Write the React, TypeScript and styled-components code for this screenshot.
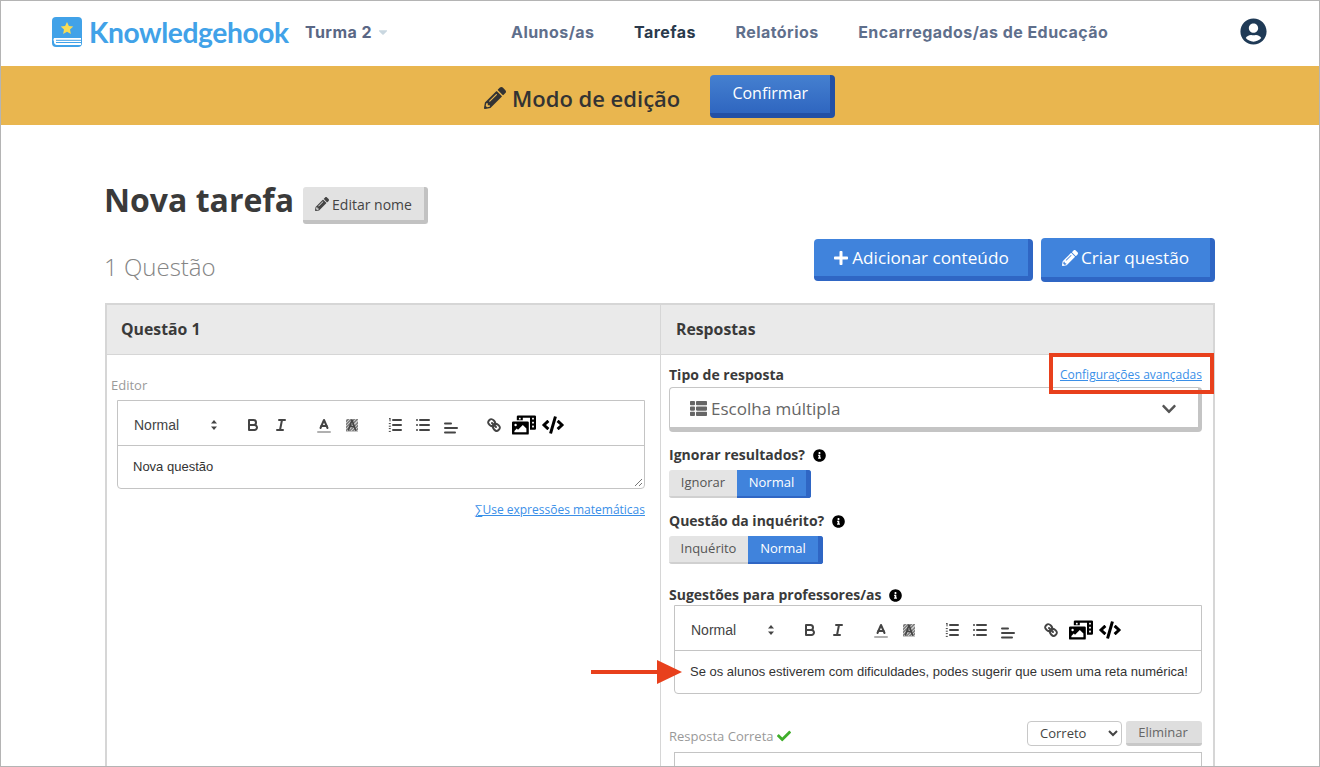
import React from 'react';
import styled, { createGlobalStyle } from 'styled-components';
import {
  FaPencilAlt,
  FaPlus,
  FaThList,
  FaChevronDown,
  FaInfoCircle,
  FaCheck,
  FaUserCircle,
  FaCaretDown,
  FaPhotoVideo,
  FaCode,
} from 'react-icons/fa';

const GlobalStyle = createGlobalStyle`
  html, body {
    margin: 0;
    padding: 0;
    background: #fff;
    overflow: hidden;
  }
  * { box-sizing: border-box; }
`;

const Frame = styled.div`
  position: relative;
  width: 1320px;
  height: 767px;
  overflow: hidden;
  border: 1px solid #b4b4b4;
  background: #fff;
  font-family: "Open Sans", "Liberation Sans", sans-serif;
  color: #3a3a3a;
`;

// header
const Header = styled.header`
  height: 65px;
  display: flex;
  align-items: center;
  padding: 0 0 4px 51px;
`;

const LogoLink = styled.a`
  display: flex;
  align-items: center;
  gap: 6px;
  width: 253px;
  height: 30px;
`;

const LogoText = styled.span`
  font-family: "Lato", sans-serif;
  font-size: 28.2px;
  font-weight: 700;
  color: #41a2e8;
  letter-spacing: -0.4px;
`;

const ClassName = styled.div`
  display: flex;
  align-items: center;
  gap: 4px;
  width: 206px;
  font-family: "Inter", sans-serif;
  font-size: 16px;
  font-weight: 700;
  letter-spacing: 0.45px;
  color: #5a6785;
  svg { color: #c9d7e0; font-size: 14px; }
`;

const Nav = styled.nav`
  display: flex;
  gap: 39.5px;
  width: 729px;
`;

const NavItem = styled.a<{ $active?: boolean }>`
  font-family: "Inter", sans-serif;
  font-size: 16px;
  font-weight: 700;
  letter-spacing: 0.45px;
  color: ${p => (p.$active ? '#2a3a4c' : '#5f6f8c')};
`;

const UserIcon = styled(FaUserCircle)`
  font-size: 27px;
  color: #1f3a56;
`;

// yellow bar
const EditBar = styled.div`
  height: 59px;
  background: #e9b64f;
  display: flex;
  align-items: center;
  padding-left: 483px;
  gap: 30px;
`;

const EditTitle = styled.div`
  display: flex;
  align-items: center;
  gap: 6px;
  margin-top: 4px;
  font-size: 22px;
  font-weight: 600;
  color: #333;
  svg { font-size: 22px; }
`;

const ConfirmButton = styled.button`
  width: 125px;
  height: 43px;
  margin-top: 2px;
  padding: 0 0 2px 0;
  border: none;
  border-right: 5px solid #2350a5;
  border-bottom: 5px solid #2350a5;
  border-radius: 4px;
  background: linear-gradient(#4580d0, #2f66c0);
  color: #fff;
  font-family: inherit;
  font-size: 16px;
`;

const Content = styled.main`
  width: 1110px;
  margin-left: 104px;
`;

const TitleRow = styled.div`
  display: flex;
  align-items: center;
  gap: 9px;
  margin-top: 61px;
  height: 38px;
`;

const PageTitle = styled.h1`
  margin: 0 0 10px -1px;
  font-size: 32px;
  font-weight: 700;
  color: #3a3a3a;
  line-height: 1;
`;

const GrayButton = styled.button`
  display: flex;
  align-items: center;
  gap: 3px;
  width: 125px;
  height: 37px;
  padding: 2px 0 0 12px;
  border: none;
  border-right: 4px solid #c2c2c2;
  border-bottom: 4px solid #c2c2c2;
  border-radius: 3px;
  background: #e2e2e2;
  color: #444;
  font-family: inherit;
  font-size: 14px;
  svg { font-size: 14px; }
`;

const SubRow = styled.div`
  display: flex;
  align-items: center;
  justify-content: space-between;
  margin-top: 14px;
  height: 44px;
`;

const Count = styled.div`
  margin: 12px 0 0 -1px;
  font-size: 24px;
  font-weight: 300;
  color: #858585;
`;

const Actions = styled.div`
  display: flex;
  align-items: center;
  gap: 8px;
`;

const BlueButton = styled.button<{ $w: number; $h: number }>`
  display: flex;
  align-items: center;
  justify-content: center;
  gap: 3px;
  width: ${p => p.$w}px;
  height: ${p => p.$h}px;
  padding: 0;
  border: none;
  border-right: 5px solid #2f66c4;
  border-bottom: 5px solid #2f66c4;
  border-radius: 4px;
  background: #4083dc;
  color: #fff;
  font-family: inherit;
  font-size: 17.2px;
  svg { font-size: 16px; }
`;

// question table
const Table = styled.section`
  display: grid;
  grid-template-columns: 555px 555px;
  margin-top: 21px;
  border-top: 2px solid #d6d6d6;
  height: 500px;
`;

const LeftColumn = styled.div`
  border-left: 2px solid #d6d6d6;
`;

const RightColumn = styled.div`
  border-left: 1px solid #d6d6d6;
  border-right: 2px solid #d6d6d6;
`;

const ColumnHead = styled.div`
  height: 50px;
  display: flex;
  align-items: center;
  padding: 0 0 2px 14px;
  background: #eaeaea;
  border-bottom: 1px solid #d6d6d6;
  font-size: 15.8px;
  font-weight: 700;
  color: #3a3a3a;
`;

const RightHead = styled(ColumnHead)`
  padding-left: 15px;
`;

const LeftBody = styled.div`
  padding: 22px 15px 0 4px;
`;

const MutedLabel = styled.div`
  margin-bottom: 7px;
  font-size: 13px;
  color: #9a9a9a;
  line-height: 16px;
`;

const EditorBox = styled.div<{ $inset?: number }>`
  position: relative;
  margin-left: ${p => p.$inset ?? 0}px;
  border: 1px solid #c4c4c4;
  border-radius: 0 0 4px 4px;
  height: 89px;
`;

const Toolbar = styled.div`
  height: 45px;
  display: flex;
  align-items: center;
  padding: 3px 0 0 8px;
  border-bottom: 1px solid #c4c4c4;
`;

const Picker = styled.div`
  width: 98px;
  margin-right: 15px;
  padding-left: 8px;
  display: flex;
  align-items: center;
  justify-content: space-between;
  font-family: "Liberation Sans", sans-serif;
  font-size: 14px;
  color: #444;
`;

const PickerArrows = styled.svg`
  width: 18px;
  height: 18px;
  margin-right: 1px;
`;

const ToolGroup = styled.div`
  display: flex;
  align-items: center;
  margin-right: 15px;
`;

const ToolIcon = styled.svg`
  width: 28px;
  height: 18px;
  fill: none;
  stroke: #444;
  stroke-width: 2px;
  stroke-linecap: round;
  stroke-linejoin: round;
`;

const MediaIcon = styled(FaPhotoVideo)`
  font-size: 24px;
  margin-left: 4px;
  color: #000;
`;

const CodeIcon = styled(FaCode)`
  font-size: 22px;
  margin-left: 6px;
  color: #000;
`;

const EditorText = styled.div`
  padding: 13px 15px 0;
  font-family: "Liberation Sans", sans-serif;
  font-size: 13px;
  line-height: 16px;
  color: #333;
  white-space: nowrap;
`;

const ResizeGrip = styled.svg`
  position: absolute;
  right: 1px;
  bottom: 1px;
  width: 9px;
  height: 9px;
  stroke: #777;
  stroke-width: 1;
`;

const LinkRow = styled.div`
  display: flex;
  justify-content: flex-end;
  margin-top: 13px;
`;

const TextLink = styled.a`
  font-size: 12px;
  line-height: 16px;
  color: #3a8fe8;
  text-decoration: underline;
`;

const RightBody = styled.div`
  padding: 10px 11px 0 8px;
`;

const FieldHead = styled.div`
  display: flex;
  align-items: center;
  justify-content: space-between;
  height: 22px;
  margin-top: -1px;
`;

const FieldLabel = styled.div`
  display: flex;
  align-items: center;
  gap: 8px;
  font-size: 14px;
  font-weight: 700;
  color: #3a3a3a;
  line-height: 20px;
  svg { font-size: 13px; color: #000; }
`;

const TypeSelect = styled.div`
  height: 45px;
  margin-top: 1px;
  padding: 2px 21px 0 20px;
  display: flex;
  align-items: center;
  gap: 4px;
  border: 1px solid #c6c6c6;
  border-right: 4px solid #c4c4c4;
  border-bottom: 5px solid #c4c4c4;
  border-radius: 4px;
  font-size: 17px;
  color: #666;
  svg:first-child { font-size: 17px; }
  svg:last-child { margin-left: auto; font-size: 16px; color: #555; }
`;

const FieldBlock = styled.div<{ $top: number }>`
  margin-top: ${p => p.$top}px;
`;

const Segmented = styled.div`
  display: inline-flex;
  margin-top: 5px;
  height: 28px;
  border-radius: 3px;
  overflow: hidden;
  font-size: 13px;
`;

const SegmentOff = styled.div<{ $w: number }>`
  width: ${p => p.$w}px;
  display: flex;
  align-items: center;
  justify-content: center;
  padding-bottom: 2px;
  background: #e4e4e4;
  border-bottom: 2px solid #d0d0d0;
  color: #555;
`;

const SegmentOn = styled.div<{ $w: number }>`
  width: ${p => p.$w}px;
  display: flex;
  align-items: center;
  justify-content: center;
  padding-bottom: 2px;
  background: #4083dc;
  border-right: 5px solid #2f66c4;
  border-bottom: 2px solid #2f66c4;
  color: #fff;
`;

const AnswerHead = styled.div`
  display: flex;
  align-items: center;
  margin-top: 27px;
  height: 25px;
`;

const AnswerLabel = styled.div`
  display: flex;
  align-items: center;
  gap: 3px;
  margin-right: auto;
  padding-top: 4px;
  font-size: 13px;
  color: #999;
  svg { color: #3fae2a; font-size: 14px; }
`;

const StateSelect = styled.select`
  width: 95px;
  height: 25px;
  padding: 0 0 2px 8px;
  border: 1px solid #c8c8c8;
  border-radius: 4px;
  background: #fff;
  color: #444;
  font-family: inherit;
  font-size: 13px;
`;

const DeleteButton = styled.button`
  width: 76px;
  height: 25px;
  margin-left: 4px;
  padding: 0 2px 0 0;
  border: none;
  border-bottom: 3px solid #c8c8c8;
  border-radius: 3px;
  background: #dedede;
  color: #666;
  font-family: inherit;
  font-size: 13px;
`;

const AnswerBox = styled.div`
  height: 60px;
  margin: 6px 0 0 5px;
  border: 1px solid #c4c4c4;
`;

// annotations drawn over the screenshot
const RedBox = styled.div`
  position: absolute;
  left: 1048px;
  top: 352px;
  width: 165px;
  height: 41px;
  border: 4px solid #e8401c;
`;

const RedArrow = styled.svg`
  position: absolute;
  left: 590px;
  top: 659px;
  width: 91px;
  height: 24px;
`;

function EditorToolbar() {
  return (
    <Toolbar>
      <Picker>
        Normal
        <PickerArrows viewBox="0 0 18 18">
          <polygon points="6 7.5 9 4 12 7.5" fill="#444" />
          <polygon points="6 10.5 9 14 12 10.5" fill="#444" />
        </PickerArrows>
      </Picker>
      <ToolGroup>
        <ToolIcon viewBox="0 0 18 18" preserveAspectRatio="xMidYMid meet">
          <path d="M5,4H9.5A2.5,2.5,0,0,1,12,6.5v0A2.5,2.5,0,0,1,9.5,9H5V4Z" />
          <path d="M5,9h5.5A2.5,2.5,0,0,1,13,11.5v0A2.5,2.5,0,0,1,10.5,14H5V9Z" />
        </ToolIcon>
        <ToolIcon viewBox="0 0 18 18">
          <line x1="7" x2="13" y1="4" y2="4" />
          <line x1="5" x2="11" y1="14" y2="14" />
          <line x1="8" x2="10" y1="14" y2="4" />
        </ToolIcon>
      </ToolGroup>
      <ToolGroup>
        <ToolIcon viewBox="0 0 18 18">
          <line x1="3" x2="15" y1="16" y2="16" stroke="#b0b0b0" />
          <polyline points="5.5 12 9 4 12.5 12" />
          <line x1="11.63" x2="6.38" y1="10" y2="10" />
        </ToolIcon>
        <ToolIcon viewBox="0 0 18 18">
          <g strokeWidth="0" fill="#444">
            <polygon points="3 3 15 3 15 16 3 16" opacity="0.3" />
            <path d="M3 5 5 3h1L3 6ZM3 8l5-5h1L3 9ZM3 11l8-8h1L3 12ZM3 14 14 3h1L3 15ZM6 15l9-9v1l-8 8ZM9 15l6-6v1l-5 5ZM12 15l3-3v1l-2 2Z" />
          </g>
          <polyline points="5.5 14 9 4 12.5 14" strokeWidth="1.6" />
          <line x1="11.4" x2="6.6" y1="10.5" y2="10.5" strokeWidth="1.6" />
        </ToolIcon>
      </ToolGroup>
      <ToolGroup>
        <ToolIcon viewBox="0 0 18 18">
          <line x1="7" x2="15" y1="4" y2="4" />
          <line x1="7" x2="15" y1="9" y2="9" />
          <line x1="7" x2="15" y1="14" y2="14" />
          <g strokeWidth="1" strokeLinecap="butt">
            <line x1="3" x2="4.6" y1="2.6" y2="2.6" />
            <line x1="4" x2="4" y1="2.6" y2="5.4" />
            <line x1="2.8" x2="4.8" y1="7.6" y2="7.6" />
            <line x1="2.8" x2="4.8" y1="10.2" y2="10.2" />
            <line x1="2.8" x2="4.8" y1="12.6" y2="12.6" />
            <line x1="2.8" x2="4.8" y1="15.4" y2="15.4" />
          </g>
        </ToolIcon>
        <ToolIcon viewBox="0 0 18 18">
          <line x1="6" x2="15" y1="4" y2="4" />
          <line x1="6" x2="15" y1="9" y2="9" />
          <line x1="6" x2="15" y1="14" y2="14" />
          <line x1="3" x2="3" y1="4" y2="4" />
          <line x1="3" x2="3" y1="9" y2="9" />
          <line x1="3" x2="3" y1="14" y2="14" />
        </ToolIcon>
        <ToolIcon viewBox="0 0 18 18">
          <line x1="3" x2="15" y1="12" y2="12" />
          <line x1="3" x2="13" y1="16.5" y2="16.5" />
          <line x1="3" x2="9" y1="7.5" y2="7.5" />
        </ToolIcon>
      </ToolGroup>
      <ToolIcon viewBox="0 0 18 18">
        <line x1="7" x2="11" y1="7" y2="11" />
        <path d="M8.9,4.577a3.476,3.476,0,0,1,.36,4.679A3.476,3.476,0,0,1,4.577,8.9C3.185,7.5,2.035,6.4,4.217,4.217S7.5,3.185,8.9,4.577Z" />
        <path d="M13.423,9.1a3.476,3.476,0,0,0-4.679-.36,3.476,3.476,0,0,0,.36,4.679c1.392,1.392,2.5,2.542,4.679.36S14.815,10.5,13.423,9.1Z" />
      </ToolIcon>
      <MediaIcon />
      <CodeIcon />
    </Toolbar>
  );
}

function Logo() {
  return (
    <svg width="31" height="30" viewBox="0 0 31 30">
      <rect x="0" y="0" width="30" height="30" rx="4" fill="#41a2e8" />
      <path d="M2 21h27v7H5a3 3 0 0 1-3-3.5A3 3 0 0 1 2 21Z" fill="#fff" />
      <path d="M4 23.3h25M4 25.5h25" stroke="#41a2e8" strokeWidth="1" />
      <polygon
        points="15,5 16.9,9.1 21.3,9.6 18,12.6 18.9,17 15,14.8 11.1,17 12,12.6 8.7,9.6 13.1,9.1"
        fill="#f7dc55"
      />
    </svg>
  );
}

export default function App() {
  return (
    <Frame>
      <GlobalStyle />
      <Header>
        <LogoLink>
          <Logo />
          <LogoText>Knowledgehook</LogoText>
        </LogoLink>
        <ClassName>
          Turma 2
          <FaCaretDown />
        </ClassName>
        <Nav>
          <NavItem>Alunos/as</NavItem>
          <NavItem $active>Tarefas</NavItem>
          <NavItem>Relatórios</NavItem>
          <NavItem>Encarregados/as de Educação</NavItem>
        </Nav>
        <UserIcon />
      </Header>

      <EditBar>
        <EditTitle>
          <FaPencilAlt />
          Modo de edição
        </EditTitle>
        <ConfirmButton>Confirmar</ConfirmButton>
      </EditBar>

      <Content>
        <TitleRow>
          <PageTitle>Nova tarefa</PageTitle>
          <GrayButton>
            <FaPencilAlt />
            Editar nome
          </GrayButton>
        </TitleRow>

        <SubRow>
          <Count>1 Questão</Count>
          <Actions>
            <BlueButton $w={219} $h={42}>
              <FaPlus />
              Adicionar conteúdo
            </BlueButton>
            <BlueButton $w={174} $h={44}>
              <FaPencilAlt />
              Criar questão
            </BlueButton>
          </Actions>
        </SubRow>

        <Table>
          <LeftColumn>
            <ColumnHead>Questão 1</ColumnHead>
            <LeftBody>
              <MutedLabel>Editor</MutedLabel>
              <EditorBox $inset={6}>
                <EditorToolbar />
                <EditorText>Nova questão</EditorText>
                <ResizeGrip viewBox="0 0 9 9">
                  <line x1="1" y1="8" x2="8" y2="1" />
                  <line x1="5" y1="8" x2="8" y2="5" />
                </ResizeGrip>
              </EditorBox>
              <LinkRow>
                <TextLink>∑Use expressões matemáticas</TextLink>
              </LinkRow>
            </LeftBody>
          </LeftColumn>

          <RightColumn>
            <RightHead>Respostas</RightHead>
            <RightBody>
              <FieldHead>
                <FieldLabel>Tipo de resposta</FieldLabel>
                <TextLink>Configurações avançadas</TextLink>
              </FieldHead>
              <TypeSelect>
                <FaThList />
                Escolha múltipla
                <FaChevronDown />
              </TypeSelect>

              <FieldBlock $top={13}>
                <FieldLabel>
                  Ignorar resultados?
                  <FaInfoCircle />
                </FieldLabel>
                <Segmented>
                  <SegmentOff $w={68}>Ignorar</SegmentOff>
                  <SegmentOn $w={74}>Normal</SegmentOn>
                </Segmented>
              </FieldBlock>

              <FieldBlock $top={13}>
                <FieldLabel>
                  Questão da inquérito?
                  <FaInfoCircle />
                </FieldLabel>
                <Segmented>
                  <SegmentOff $w={79}>Inquérito</SegmentOff>
                  <SegmentOn $w={75}>Normal</SegmentOn>
                </Segmented>
              </FieldBlock>

              <FieldBlock $top={21}>
                <FieldLabel>
                  Sugestões para professores/as
                  <FaInfoCircle />
                </FieldLabel>
                <EditorBox $inset={5}>
                  <EditorToolbar />
                  <EditorText>Se os alunos estiverem com dificuldades, podes sugerir que usem uma reta numérica!</EditorText>
                </EditorBox>
              </FieldBlock>

              <AnswerHead>
                <AnswerLabel>
                  Resposta Correta
                  <FaCheck />
                </AnswerLabel>
                <StateSelect defaultValue="Correto">
                  <option>Correto</option>
                  <option>Incorreto</option>
                </StateSelect>
                <DeleteButton>Eliminar</DeleteButton>
              </AnswerHead>
              <AnswerBox />
            </RightBody>
          </RightColumn>
        </Table>
      </Content>

      <RedBox />
      <RedArrow viewBox="0 0 91 24">
        <rect x="0" y="10" width="67" height="4" fill="#e8401c" />
        <polygon points="66,0 91,12 66,24" fill="#e8401c" />
      </RedArrow>
    </Frame>
  );
}
